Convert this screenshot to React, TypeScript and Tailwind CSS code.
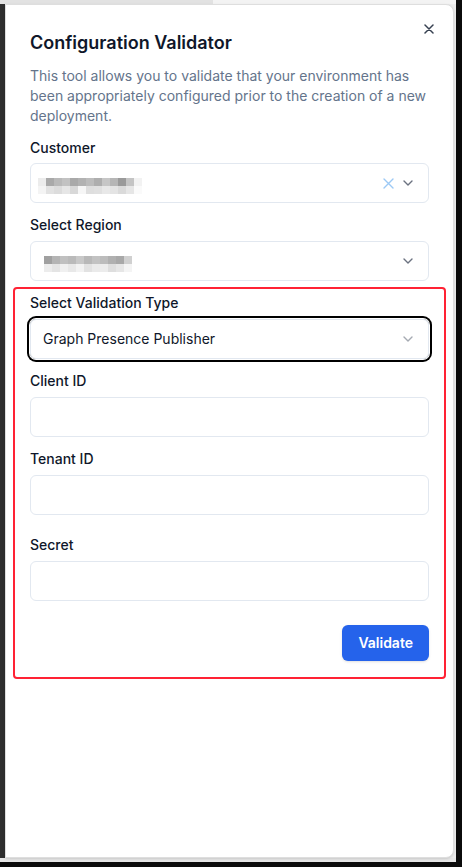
import React from 'react';

const customerTop = ['bg-[#ececec]', 'bg-[#a9a9a9]', 'bg-[#b9b9b9]', 'bg-[#c2c2c2]', 'bg-[#a9a9a9]', 'bg-[#b2b2b2]', 'bg-[#bcbcbc]', 'bg-[#aeaeae]', 'bg-[#c6c6c6]', 'bg-[#b6b6b6]', 'bg-[#9a9a9a]', 'bg-[#c4c4c4]', 'bg-[#f2f2f2]'];
const customerBottom = ['bg-[#f4f4f4]', 'bg-[#e2e2e2]', 'bg-[#dcdcdc]', 'bg-[#e6e6e6]', 'bg-[#d8d8d8]', 'bg-[#f6f6f6]', 'bg-[#dedede]', 'bg-[#e0e0e0]', 'bg-[#e8e8e8]', 'bg-[#e4e4e4]', 'bg-[#dadada]', 'bg-[#e6e6e6]', 'bg-[#fafafa]'];
const regionTop = ['bg-[#a0a0a0]', 'bg-[#b4b4b4]', 'bg-[#c0c0c0]', 'bg-[#bababa]', 'bg-[#c8c8c8]', 'bg-[#b8b8b8]', 'bg-[#c2c2c2]', 'bg-[#bcbcbc]', 'bg-[#b0b0b0]', 'bg-[#a8a8a8]', 'bg-[#d0d0d0]'];
const regionBottom = ['bg-[#ececec]', 'bg-[#e4e4e4]', 'bg-[#f0f0f0]', 'bg-[#e8e8e8]', 'bg-[#f2f2f2]', 'bg-[#e2e2e2]', 'bg-[#eaeaea]', 'bg-[#ececec]', 'bg-[#dedede]', 'bg-[#e6e6e6]', 'bg-[#f4f4f4]'];

// redacted value, shown as a pixelated blur
const Blurred: React.FC<{ top: string[]; bottom: string[] }> = ({ top, bottom }) => (
  <div className="flex flex-col">
    <div className="flex">
      {top.map((c, i) => (
        <div key={i} className={`h-2 w-2 ${c}`} />
      ))}
    </div>
    <div className="flex">
      {bottom.map((c, i) => (
        <div key={i} className={`h-2 w-2 ${c}`} />
      ))}
    </div>
  </div>
);

const Chevron: React.FC<{ light?: boolean }> = ({ light }) => (
  <svg width="10" height="6" viewBox="0 0 10 6" fill="none" className={light ? 'opacity-60' : ''}>
    <path d="M1 1l4 4 4-4" stroke="#6b7280" strokeWidth="1.4" strokeLinecap="round" strokeLinejoin="round" />
  </svg>
);

const ClearIcon: React.FC = () => (
  <svg width="11" height="11" viewBox="0 0 11 11" fill="none">
    <path d="M1 1l9 9M10 1l-9 9" stroke="#9cc9f5" strokeWidth="1.4" strokeLinecap="round" />
  </svg>
);

const Label: React.FC<{ children: React.ReactNode; className?: string }> = ({ children, className }) => (
  <label className={`block text-sm leading-5 font-medium text-[#0f172a] ${className ?? ''}`}>{children}</label>
);

const Input: React.FC = () => (
  <div className="mt-1.5 h-10 rounded-md border border-[#e2e8f0] bg-white" />
);

export default function App() {
  return (
    <div className="h-[867px] w-[462px] overflow-hidden bg-[#0b0b0b] font-['Inter',sans-serif]">
      <div className="flex h-[862px] w-[456px] flex-col bg-[#ebebeb]">
        <div className="flex h-1">
          <div className="w-[213px] bg-[#e2e2e2]" />
          <div className="flex-1 bg-[#f3f3f3]" />
        </div>
        <div className="flex flex-1">
          <div className="w-[5px] bg-[#2e2e2e]" />
          <div className="relative mr-[2px] flex-1 rounded-r-lg border border-[#dedede] bg-white px-6 pt-6 shadow-sm">
            <button className="absolute right-4 top-4 flex h-4 w-4 items-center justify-center text-[#374151]">
              <svg width="10" height="10" viewBox="0 0 10 10" fill="none">
                <path d="M1 1l8 8M9 1l-8 8" stroke="currentColor" strokeWidth="1.5" strokeLinecap="round" />
              </svg>
            </button>

            <h2 className="text-lg leading-7 font-semibold text-[#0f172a]">Configuration Validator</h2>
            <p className="mt-[9px] text-sm leading-5 text-[#64748b]">
              This tool allows you to validate that your environment has been appropriately configured prior to the creation of a new deployment.
            </p>

            <Label className="mt-3">Customer</Label>
            <div className="mt-[5px] flex h-10 items-center rounded-md border border-[#e2e8f0] pl-[7px] pr-[15px]">
              <div className="mt-[5px]">
                <Blurred top={customerTop} bottom={customerBottom} />
              </div>
              <div className="flex-1" />
              <ClearIcon />
              <div className="ml-[9px]">
                <Chevron />
              </div>
            </div>

            <Label className="mt-3">Select Region</Label>
            <div className="mt-1.5 flex h-10 items-center rounded-md border border-[#e2e8f0] pl-[13px] pr-[15px]">
              <div className="mt-[6px]">
                <Blurred top={regionTop} bottom={regionBottom} />
              </div>
              <div className="flex-1" />
              <Chevron />
            </div>

            <div className="-mx-[17px] mt-1.5 rounded border-2 border-[#ff2234] px-[15px] pt-1 pb-4">
              <Label>Select Validation Type</Label>
              <div className="mt-1.5 flex h-10 items-center rounded-md border border-[#e2e8f0] pl-3 pr-[15px] ring-2 ring-black ring-offset-1">
                <span className="flex-1 text-sm text-[#0f172a]">Graph Presence Publisher</span>
                <Chevron light />
              </div>

              <Label className="mt-3">Client ID</Label>
              <Input />

              <Label className="mt-3">Tenant ID</Label>
              <Input />

              <Label className="mt-5">Secret</Label>
              <Input />

              <div className="mt-6 flex justify-end">
                <button className="h-9 rounded-md bg-[#2563eb] px-4 text-sm font-semibold text-white shadow-sm">Validate</button>
              </div>
            </div>
          </div>
        </div>
        <div className="h-1 bg-[#e6e6e6]" />
      </div>
    </div>
  );
}
